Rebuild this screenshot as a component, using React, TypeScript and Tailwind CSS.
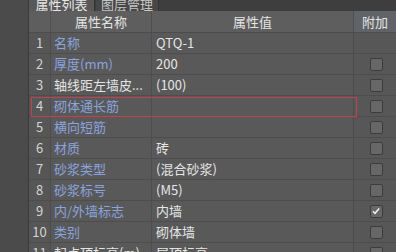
const rows: { n: number; name: string; value: string; blue: boolean; checked?: boolean }[] = [
  { n: 1, name: "名称", value: "QTQ-1", blue: true },
  { n: 2, name: "厚度(mm)", value: "200", blue: true },
  { n: 3, name: "轴线距左墙皮...", value: "(100)", blue: false },
  { n: 4, name: "砌体通长筋", value: "", blue: true },
  { n: 5, name: "横向短筋", value: "", blue: true },
  { n: 6, name: "材质", value: "砖", blue: true },
  { n: 7, name: "砂浆类型", value: "(混合砂浆)", blue: true },
  { n: 8, name: "砂浆标号", value: "(M5)", blue: true },
  { n: 9, name: "内/外墙标志", value: "内墙", blue: true, checked: true },
  { n: 10, name: "类别", value: "砌体墙", blue: true },
  { n: 11, name: "起点顶标高(m)", value: "层顶标高", blue: false },
];

function Checkbox({ checked }: { checked?: boolean }) {
  return (
    <div className="flex h-[13px] w-[13px] items-center justify-center rounded-[2px] border border-[#3c3c3c] bg-[#676767]">
      {checked && (
        <svg viewBox="0 0 12 12" className="h-[10px] w-[10px]">
          <path d="M2.2 6.2 L4.8 8.8 L9.8 3" fill="none" stroke="#f2f2f2" strokeWidth="1.8" />
        </svg>
      )}
    </div>
  );
}

export default function App() {
  return (
    <div
      className="flex h-[252px] w-[396px] overflow-hidden bg-[#4a4a4a] text-[13px] text-[#e6e6e6]"
      style={{ fontFamily: '"Noto Sans CJK SC", "Liberation Sans", sans-serif' }}
    >
      <div className="w-[29px] shrink-0 border-r border-[#3a3a3a] bg-[#4b4b4b]" />
      <div className="flex min-w-0 flex-1 flex-col">
        <div className="flex h-[11px] shrink-0 items-end bg-[#3e3e3e]">
          <div className="flex h-[11px] w-[66px] items-end justify-center overflow-hidden border-r border-[#333] bg-[#595959]">
            <span className="leading-[13px] text-[#e8e8e8]">属性列表</span>
          </div>
          <div className="ml-[1px] flex h-[11px] w-[63px] items-end justify-center overflow-hidden border-r border-[#333] bg-[#474747]">
            <span className="leading-[13px] text-[#c4c4c4]">图层管理</span>
          </div>
        </div>
        <div className="grid h-[22px] shrink-0 grid-cols-[22px_101px_202px_1fr] border-b border-[#4c4c4c] bg-[#5e5e5e] text-[#e4e4e4]">
          <div className="border-r border-[#4f4f4f]" />
          <div className="flex items-center justify-center border-r border-[#4f4f4f]">属性名称</div>
          <div className="flex items-center justify-center border-r border-[#4f4f4f]">属性值</div>
          <div className="flex items-center justify-center bg-[#606468]">附加</div>
        </div>
        <div className="flex flex-col bg-[#595959]">
          {rows.map((r) => (
            <div
              key={r.n}
              className="relative grid h-[21px] shrink-0 grid-cols-[22px_101px_202px_1fr] border-b border-[#4d4d4d]"
            >
              <div className="flex items-center justify-center border-r border-[#4d4d4d] bg-[#565656] text-[#d4d4d4]">
                {r.n}
              </div>
              <div
                className={`flex items-center overflow-hidden whitespace-nowrap border-r border-[#4d4d4d] pl-[3px] ${
                  r.blue ? "text-[#8aa4df]" : "text-[#e6e6e6]"
                }`}
              >
                {r.name}
              </div>
              <div className="flex items-center overflow-hidden whitespace-nowrap border-r border-[#4d4d4d] pl-[4px]">
                {r.value}
              </div>
              <div className="flex items-center justify-center bg-[#575757] pl-[2px]">
                {r.n !== 1 && <Checkbox checked={r.checked} />}
              </div>
              {r.n === 4 && (
                <div className="pointer-events-none absolute left-[2px] top-[1px] bottom-[-1px] w-[326px] border border-[#c4404f]" />
              )}
            </div>
          ))}
        </div>
      </div>
    </div>
  );
}
